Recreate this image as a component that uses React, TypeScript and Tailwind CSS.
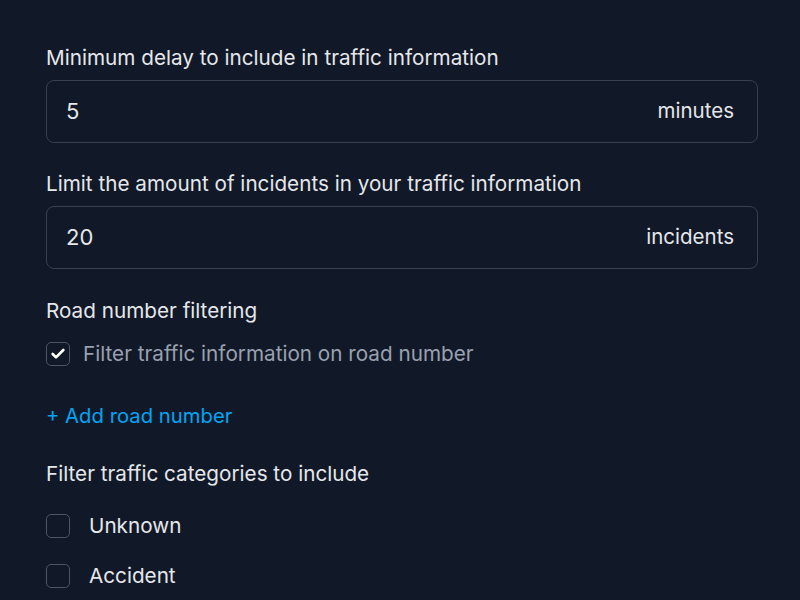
import { Check } from 'lucide-react';

const font = { fontFamily: 'Inter, "Noto Sans", sans-serif' };

function NumberField({ label, value, unit }: { label: string; value: string; unit: string }) {
  return (
    <div className="flex flex-col">
      <div className="text-[20.7px] leading-[26px] text-gray-200 mb-[9px]">{label}</div>
      <div className="h-[63px] rounded-lg border border-gray-700 flex items-center justify-between pl-[19px] pr-[23px]">
        <span className="text-[22px] text-gray-200">{value}</span>
        <span className="text-[20.5px] text-gray-200">{unit}</span>
      </div>
    </div>
  );
}

function Box({ checked }: { checked?: boolean }) {
  return (
    <div className="w-[24px] h-[24px] rounded-[5px] border border-gray-600 flex items-center justify-center shrink-0">
      {checked && <Check size={16} strokeWidth={4} className="text-white" />}
    </div>
  );
}

export default function App() {
  return (
    <div className="w-[800px] h-[600px] overflow-hidden bg-[#111827]" style={font}>
      <div className="pl-[46px] pr-[42px] pt-[45px] flex flex-col">
        <NumberField label="Minimum delay to include in traffic information" value="5" unit="minutes" />
        <div className="h-[28px]" />
        <NumberField label="Limit the amount of incidents in your traffic information" value="20" unit="incidents" />

        <div className="mt-[29px] text-[20.7px] leading-[26px] text-gray-200">Road number filtering</div>
        <label className="mt-[17px] flex items-center gap-[13px] h-[26px]">
          <Box checked />
          <span className="text-[20.7px] leading-[26px] text-gray-400">Filter traffic information on road number</span>
        </label>

        <button className="mt-[36px] block text-left text-[20.3px] leading-[26px] text-sky-500">+ Add road number</button>

        <div className="mt-[32px] text-[20.7px] leading-[26px] text-gray-200">Filter traffic categories to include</div>
        <div className="mt-[26px] flex flex-col gap-[24px]">
          {['Unknown', 'Accident'].map(c => (
            <label key={c} className="flex items-center gap-[19px] h-[26px]">
              <Box />
              <span className="text-[20.7px] leading-[26px] text-gray-200">{c}</span>
            </label>
          ))}
        </div>
      </div>
    </div>
  );
}
